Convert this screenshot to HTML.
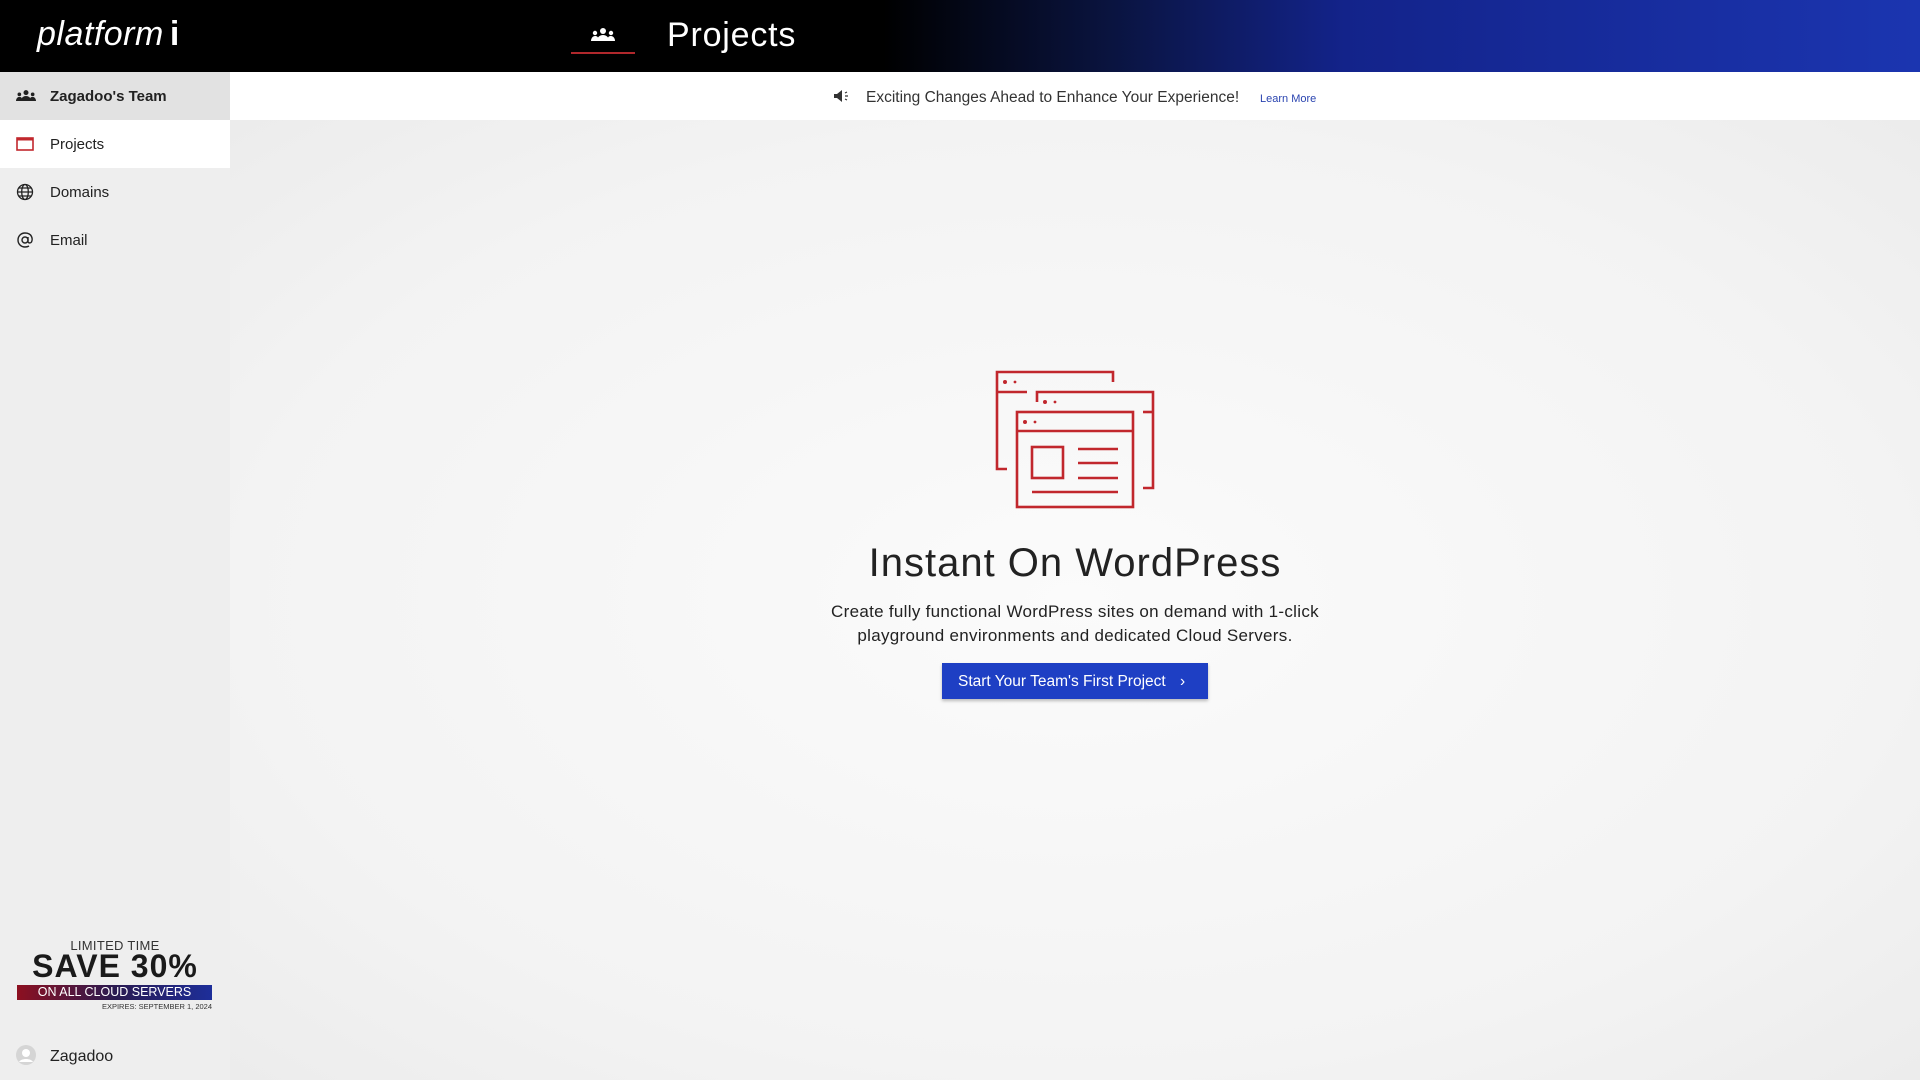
<!DOCTYPE html>
<html><head><meta charset="utf-8"><style>
*{margin:0;padding:0;box-sizing:border-box}
body{width:1920px;height:1080px;overflow:hidden;font-family:"Liberation Sans",sans-serif;background:#f4f4f4;position:relative;color:#222}
.hdr{position:absolute;left:0;top:0;width:1920px;height:72px;background:linear-gradient(90deg,#000 0%,#000 46%,#0a1440 58%,#13238a 70%,#1b35b0 100%)}
.logo{position:absolute;left:37px;top:15px;color:#fff;font-style:italic;font-size:34px;letter-spacing:.5px}
.side{position:absolute;left:0;top:72px;width:230px;height:1008px;background:#eeeeee}
.item{position:absolute;left:0;width:230px;height:48px;display:flex;align-items:center;font-size:15px;color:#222}
.item svg{position:absolute;left:16px}
.item span{position:absolute;left:50px}
.main{position:absolute;left:230px;top:120px;width:1690px;height:960px;background:radial-gradient(ellipse at 50% 50%,#fbfbfb 0%,#f3f3f3 70%,#ececec 100%)}
.banner{position:absolute;left:230px;top:72px;width:1690px;height:48px;background:#fff}
</style></head><body>
<div class="hdr">
 <div class="logo">platform<span style="font-style:normal;font-weight:bold;margin-left:6px">i</span></div>
 <svg style="position:absolute;left:591px;top:28px" width="24" height="14" viewBox="0 0 24 14" fill="#fff"><circle cx="12" cy="3" r="3"/><circle cx="4" cy="5" r="2.2"/><circle cx="20" cy="5" r="2.2"/><path d="M6 13c0-4 3-6 6-6s6 2 6 6z"/><path d="M0 13c0-3 2-5 4-5s3 1 3 2v3z"/><path d="M24 13c0-3-2-5-4-5s-3 1-3 2v3z"/></svg>
 <div style="position:absolute;left:571px;top:52px;width:64px;height:2px;background:#b0282c"></div>
 <div style="position:absolute;left:667px;top:16px;color:#fff;font-size:34px;letter-spacing:.8px">Projects</div>
</div>
<div class="side">
 <div class="item" style="top:0;background:#e2e2e2;font-weight:bold"><svg width="20" height="12" viewBox="0 0 24 14" fill="#222"><circle cx="12" cy="3" r="3"/><circle cx="4" cy="5" r="2.2"/><circle cx="20" cy="5" r="2.2"/><path d="M6 13c0-4 3-6 6-6s6 2 6 6z"/><path d="M0 13c0-3 2-5 4-5s3 1 3 2v3z"/><path d="M24 13c0-3-2-5-4-5s-3 1-3 2v3z"/></svg><span>Zagadoo's Team</span></div>
 <div class="item" style="top:48px;background:#fff"><svg width="18" height="16" viewBox="0 0 18 16"><rect x="1" y="2" width="16" height="12" fill="none" stroke="#c1272d" stroke-width="1.6"/><rect x="1" y="2" width="16" height="2.5" fill="#c1272d"/></svg><span>Projects</span></div>
 <div class="item" style="top:96px"><svg width="18" height="18" viewBox="0 0 18 18" fill="none" stroke="#222" stroke-width="1.3"><circle cx="9" cy="9" r="7.5"/><ellipse cx="9" cy="9" rx="3.3" ry="7.5"/><path d="M1.5 9h15M3 5h12M3 13h12"/></svg><span>Domains</span></div>
 <div class="item" style="top:144px"><svg width="18" height="18" viewBox="0 0 18 18" fill="none" stroke="#222" stroke-width="1.4"><circle cx="9" cy="9" r="3"/><path d="M12 6v4.5c0 1.5 2.5 2 3.5 0.5C17 8 16 2 9 2 5 2 2 5 2 9s3 7 7 7c1.5 0 3-.4 4-1"/></svg><span>Email</span></div>
 <div style="position:absolute;left:0;width:230px;top:866px;text-align:center;font-size:13px;color:#333;letter-spacing:.3px">LIMITED TIME</div>
 <div style="position:absolute;left:0;width:230px;top:876px;text-align:center;font-size:32px;font-weight:bold;color:#1a1a1a;letter-spacing:1px">SAVE 30%</div>
 <div style="position:absolute;left:17px;width:195px;top:913px;height:15px;background:linear-gradient(90deg,#8d1020,#2a1a50 50%,#1d2e9a);color:#fff;font-size:12.5px;line-height:15px;text-align:center">ON ALL CLOUD SERVERS</div>
 <div style="position:absolute;right:18px;top:930px;font-size:7.5px;color:#333">EXPIRES: SEPTEMBER 1, 2024</div>
 <svg style="position:absolute;left:16px;top:973px" width="20" height="20" viewBox="0 0 20 20"><circle cx="10" cy="10" r="10" fill="#d5d5d5"/><circle cx="10" cy="8" r="4" fill="#fff"/><path d="M3 17c2-4 12-4 14 0" fill="#fff"/></svg>
 <div style="position:absolute;left:50px;top:976px;font-size:16px">Zagadoo</div>
</div>
<div class="main"></div>
<div class="banner">
 <svg style="position:absolute;left:603px;top:17px" width="16" height="14" viewBox="0 0 16 14" fill="#333"><path d="M1 5h3l5-4v12L4 9H1z"/><path d="M12 4l2-1M12 7h3M12 10l2 1" stroke="#333" stroke-width="1.2"/></svg>
 <div style="position:absolute;left:636px;top:17px;font-size:15.5px;color:#333">Exciting Changes Ahead to Enhance Your Experience!</div>
 <div style="position:absolute;left:1030px;top:21px;font-size:11px;color:#2a44b0">Learn More</div>
</div>
<svg style="position:absolute;left:0;top:0" width="1920" height="1080" viewBox="0 0 1920 1080" fill="none" stroke="#c1272d" stroke-width="2.6">
 <path d="M1007 469H997V372H1113V382"/><path d="M997 392H1027"/>
 <path d="M1037 402V392H1153V488H1143"/><path d="M1143 412H1153"/>
 <rect x="1017" y="412" width="116" height="95"/><path d="M1017 431H1133"/>
 <rect x="1032" y="447" width="31" height="31"/><path d="M1078 449H1118M1078 463H1118M1078 478H1118M1032 492H1118"/>
 <g fill="#c1272d" stroke="none"><circle cx="1005" cy="382" r="2"/><circle cx="1015" cy="382" r="1.4"/><circle cx="1045" cy="402" r="2"/><circle cx="1055" cy="402" r="1.4"/><circle cx="1025" cy="422" r="2"/><circle cx="1035" cy="422" r="1.4"/></g>
</svg>
<div style="position:absolute;left:230px;width:1690px;top:541px;text-align:center;font-size:40px;color:#222;letter-spacing:1px">Instant On WordPress</div>
<div style="position:absolute;left:230px;width:1690px;top:600px;text-align:center;font-size:17px;line-height:24px;color:#222;letter-spacing:.3px">Create fully functional WordPress sites on demand with 1-click<br>playground environments and dedicated Cloud Servers.</div>
<div style="position:absolute;left:942px;top:663px;width:266px;height:36px;background:#1e3fc4;box-shadow:0 2px 3px rgba(0,0,0,.25);color:#fff;font-size:15.5px;line-height:37px;padding-left:16px">Start Your Team's First Project <span style="margin-left:10px">&#8250;</span></div>
</body></html>
